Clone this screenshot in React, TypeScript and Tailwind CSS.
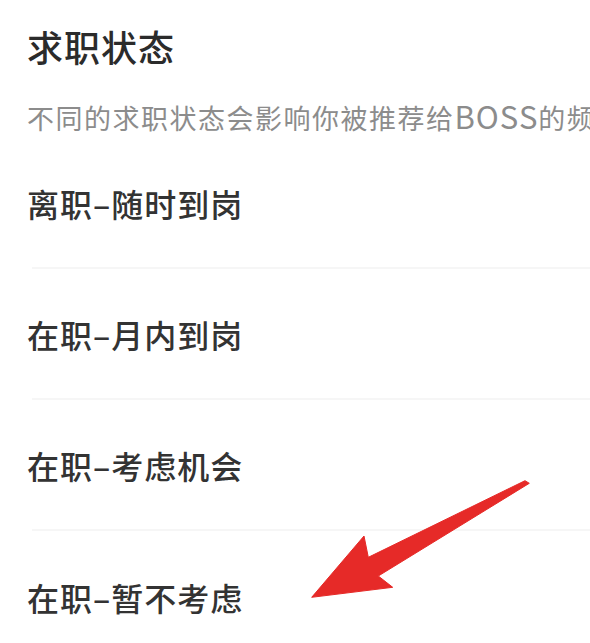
import React from 'react';

const statuses = ['离职–随时到岗', '在职–月内到岗', '在职–考虑机会', '在职–暂不考虑'];

export default function App() {
  return (
    <div
      className="relative w-[590px] h-[643px] overflow-hidden bg-white"
      style={{ fontFamily: '"Noto Sans CJK SC", "Noto Sans", sans-serif' }}
    >
      <div className="pl-[27px] pt-[24px]">
        <h1 className="text-[36px] leading-[44px] font-medium text-[#2b2b2b] tracking-[1px]">求职状态</h1>
        <p className="mt-[30px] h-[40px] text-[27px] leading-[40px] text-[#8c8c8c] whitespace-nowrap tracking-[1.5px]">
          不同的求职状态会影响你被推荐给<span className="text-[31px] leading-none tracking-[1px]">BOSS</span>的频率
        </p>
      </div>

      <ul>
        {statuses.map((s, i) => (
          <li key={s} className="h-[131px] flex flex-col">
            <div className="flex-1 flex items-center pl-[27px] text-[32px] font-medium text-[#333333] tracking-[1px]">
              {s}
            </div>
            {i < statuses.length - 1 && <div className="ml-[32px] h-[2px] bg-[#f6f6f6]" />}
          </li>
        ))}
      </ul>

      {/* red annotation arrow */}
      <svg className="absolute inset-0 pointer-events-none" width="590" height="643" viewBox="0 0 590 643">
        <polygon
          points="311.7,597.3 364,536 368.3,557.3 525,480.7 529.3,483.3 378.3,576 392.7,587.3"
          fill="#e62a28"
          stroke="#e62a28"
          strokeWidth="1"
          strokeLinejoin="round"
        />
      </svg>
    </div>
  );
}
